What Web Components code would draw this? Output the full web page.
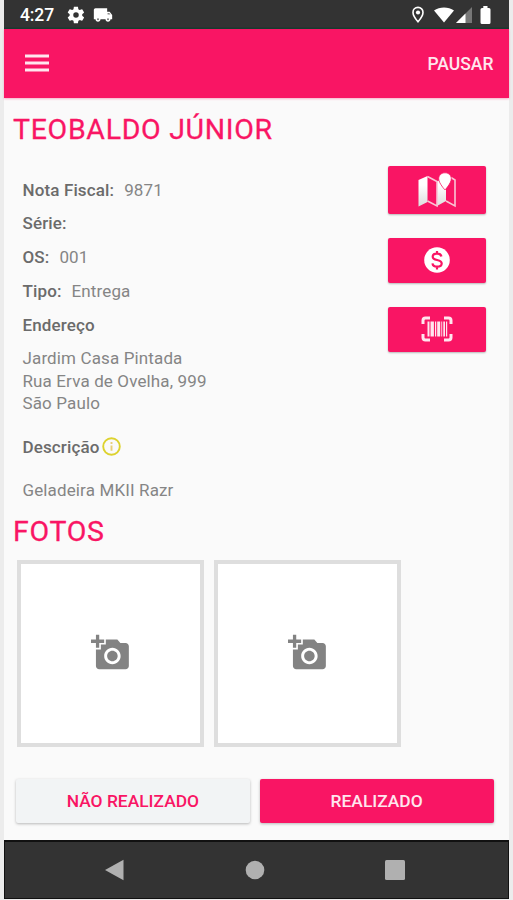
<!DOCTYPE html>
<html lang="pt-BR">
<head>
<meta charset="utf-8">
<title>Entrega</title>
<style>
html,body{margin:0;height:100%;overflow:hidden}
body{background:#ececec;font-family:Roboto,"Liberation Sans",sans-serif;--pink:#f91564}
</style>
</head>
<body>
<delivery-screen></delivery-screen>
<script>
const define = (name, html) => {
  const t = document.createElement('template');
  t.innerHTML = html;
  customElements.define(name, class extends HTMLElement {
    constructor() {
      super();
      this.attachShadow({mode: 'open'}).appendChild(t.content.cloneNode(true));
    }
  });
};

define('status-bar', `<style>
:host{display:flex;flex:none;box-sizing:border-box;height:29px;background:linear-gradient(#333 0 27px,#17392f 28px);padding:0 18px 0 16px;color:#fff;justify-content:space-between}
div{display:flex;align-items:center;height:30px}
span{font-size:17.5px;font-weight:500;width:46px;letter-spacing:-.1px}
svg{display:block;fill:#fff}
</style>
<div><span>4:27</span>
<svg width="20" height="20" viewBox="0 0 24 24"><path fill-rule="evenodd" d="M19.4 13c.1-.3.1-.6.1-1s0-.7-.1-1l2.100-1.600c.2-.2.3-.4.1-.6l-2-3.500c-.1-.2-.4-.3-.6-.2l-2.500 1c-.5-.4-1.100-.7-1.700-1l-.4-2.600c0-.3-.2-.5-.5-.5h-4c-.3 0-.5.2-.5.5L9 5.100c-.6.3-1.200.6-1.700 1l-2.500-1c-.2-.1-.5 0-.6.2l-2 3.500c-.1.2-.1.4.1.6L4.400 11c0 .3-.1.6-.1 1s0 .7.1 1l-2.100 1.600c-.2.2-.3.4-.1.6l2 3.500c.1.2.4.3.6.2l2.500-1c.5.4 1.100.7 1.700 1l.4 2.600c0 .3.2.5.5.5h4c.3 0 .5-.2.5-.5l.4-2.600c.6-.3 1.200-.6 1.700-1l2.500 1c.2.1.5 0 .6-.2l2-3.500c.1-.2.1-.4-.1-.6zM12 15.300a3.300 3.300 0 1 1 0-6.600 3.300 3.300 0 0 1 0 6.600z"/></svg>
<svg style="margin-left:7px" width="20" height="20" viewBox="0 0 24 24"><path d="M20 8h-3V4H3c-1.100 0-2 .9-2 2v11h2c0 1.660 1.340 3 3 3s3-1.340 3-3h6c0 1.660 1.340 3 3 3s3-1.340 3-3h2v-5l-3-4z"/><circle cx="6" cy="17" r="1.200" fill="#777"/><circle cx="18" cy="17" r="1.200" fill="#777"/><path fill="#888" d="M17.500 9.500h2l1.500 2h-3.500z"/></svg>
</div>
<div>
<svg width="14" height="18" viewBox="0 0 14 18"><path fill="none" stroke="#fff" stroke-width="1.600" d="M7 1.400c-3 0-5 2.200-5 5 0 3.400 5 9.400 5 9.400s5-6 5-9.400c0-2.800-2-5-5-5z"/><circle cx="7" cy="6.500" r="2.100"/></svg>
<svg style="margin-left:9px" width="20" height="16" viewBox="0 0 20 16"><path d="M0 3.600C5.500-.6 14.500-.6 20 3.600L10 15.500z"/></svg>
<svg style="margin-left:2px" width="16" height="16" viewBox="0 0 16 16"><path fill="#777" d="M0 16 16 0v16z"/><path d="M0 16 9.500 6.500V16z"/></svg>
<svg style="margin-left:7.500px" width="11" height="18" viewBox="0 0 11 18"><path d="M3.300 0h4.200v2H9q1.500 0 1.500 1.500v13Q10.500 18 9 18H2Q.5 18 .5 16.500v-13Q.5 2 2 2h1.300z"/></svg>
</div>`);

define('app-bar', `<style>
:host{display:flex;flex:none;height:68.500px;background:var(--pink);align-items:center;justify-content:space-between;padding:0 15px 0 21px;color:#ffe6ee;box-shadow:0 1px 2px #f9156455}
svg{display:block}
span{font-size:17.500px;font-weight:500;padding-top:1px}
</style>
<svg width="24" height="18" viewBox="0 0 24 18"><path stroke="#ffe6ee" stroke-width="3" d="M0 2h24M0 9h24M0 16h24"/></svg>
<span><slot></slot></span>`);

define('section-title', `<style>
:host{display:block;font-size:28.500px;line-height:34px;letter-spacing:.7px;color:var(--pink);white-space:nowrap;-webkit-text-stroke:.3px var(--pink)}
</style><slot></slot>`);

define('info-row', `<style>
:host{display:flex;gap:10px;line-height:33.750px;font-size:17px;letter-spacing:.13px;color:#858585;white-space:nowrap}
b{font-weight:500;color:#6b6b6b}
</style><b><slot name="label"></slot></b><slot></slot>`);

define('action-button', `<style>
:host{display:flex;align-items:center;justify-content:center;width:98px;height:45px;background:var(--pink);border-radius:2px;box-shadow:0 1px 2px #0004}
</style><slot></slot>`);

define('photo-slot', `<style>
:host{display:flex;box-sizing:border-box;width:187px;height:187px;border:4px solid #dedede;background:#fff;align-items:center;justify-content:center}
svg{display:block;margin:-1px -1px 0 0}
</style>
<svg width="39.500" height="39.500" viewBox="0 0 24 24" fill="#838383"><path d="M3 4V1h2v3h3v2H5v3H3V6H0V4h3zm3 6V7h3V4h7l1.830 2H21c1.100 0 2 .9 2 2v12c0 1.100-.9 2-2 2H5c-1.100 0-2-.9-2-2V10h3zm7 9c2.760 0 5-2.240 5-5s-2.240-5-5-5-5 2.240-5 5 2.240 5 5 5zm-3.200-5c0 1.770 1.430 3.200 3.200 3.200s3.200-1.430 3.200-3.200-1.430-3.200-3.200-3.200-3.200 1.430-3.200 3.200z"/></svg>`);

define('wide-button', `<style>
:host{display:flex;align-items:center;justify-content:center;flex:1;height:44px;border-radius:2px;background:#f2f4f5;color:var(--pink);font-size:17.400px;font-weight:500;box-shadow:0 1px 3px #0004}
:host([primary]){background:var(--pink);color:#ffe6ee}
</style><slot></slot>`);

define('nav-bar', `<style>
:host{display:grid;flex:none;box-sizing:border-box;height:59px;background:#333;border:1px solid #111;border-top-width:2px;padding-right:3px;grid-template-columns:repeat(3,140px);justify-content:center;align-items:center;justify-items:center}
svg{display:block;fill:#b0b0b0}
</style>
<svg width="20" height="22" viewBox="0 0 20 22"><path d="M0 11 18.500.8v20.400z"/></svg>
<svg width="20" height="20" viewBox="0 0 20 20"><circle cx="10" cy="10" r="9.300"/></svg>
<svg width="20" height="20" viewBox="0 0 20 20"><rect width="20" height="20" rx="1.500"/></svg>`);

define('delivery-screen', `<style>
:host{display:flex;flex-direction:column;width:504.500px;height:898.500px;margin-left:4px;background:#fafafa}
main{flex:1;display:flex;flex-direction:column}
.name{margin:15px 0 0 9px}
.body{box-sizing:border-box;display:flex;justify-content:space-between;height:368px;padding:27px 22.500px 0 18.500px}
.actions{display:flex;flex-direction:column;gap:24px;margin-top:-8px}
.address,.desc{font-size:17px;line-height:22.500px;letter-spacing:.13px;color:#858585}
.address{margin-top:5px}
.label{display:flex;align-items:center;gap:2px;font-size:17px;line-height:22px;letter-spacing:.13px;font-weight:500;color:#6b6b6b;margin:21px 0}
svg{display:block}
.fotos{margin-left:9px}
.photos{display:flex;gap:10px;margin:11.500px 0 0 13px}
.buttons{display:flex;gap:10px;margin:32px 15px 0 12px}
</style>
<status-bar></status-bar>
<app-bar>PAUSAR</app-bar>
<main>
<section-title class="name">TEOBALDO JÚNIOR</section-title>
<div class="body">
<div>
<info-row><span slot="label">Nota Fiscal:</span>9871</info-row>
<info-row><span slot="label">Série:</span></info-row>
<info-row><span slot="label">OS:</span>001</info-row>
<info-row><span slot="label">Tipo:</span>Entrega</info-row>
<info-row><span slot="label">Endereço</span></info-row>
<div class="address">Jardim Casa Pintada<br>Rua Erva de Ovelha, 999<br>São Paulo</div>
<div class="label">Descrição<svg width="19" height="19" viewBox="0 0 19 19"><circle cx="9.500" cy="9.500" r="8.300" fill="none" stroke="#ddd22e" stroke-width="1.900"/><path d="M9.500 5v2M9.500 8.600v5.200" stroke="#e8cf78" stroke-width="1.900"/></svg></div>
<div class="desc">Geladeira MKII Razr</div>
</div>
<div class="actions">
<action-button style="height:48px"><svg width="40" height="36" viewBox="0 0 40 36">
<defs><linearGradient id="paper" x2="0" y2="1"><stop offset=".3" stop-color="#fff"/><stop offset="1" stop-color="#ddd"/></linearGradient></defs>
<path fill="url(#paper)" d="M1.500 8 10.500 4V30L1.500 34.500zM20 9.500l4-2 5 10.500V29l-9 5z"/>
<path fill="none" stroke="#f9c4d4" stroke-width="1.600" d="M10.500 4.500 20 9.500V34L10.500 29M29 29l9 5V8l-4-2.500"/>
<path fill="#fff" stroke="#f91564" stroke-width=".8" d="M28 .8c-3.700 0-6.300 2.600-6.300 6 0 4.300 6.300 11.200 6.300 11.200s6.300-6.900 6.300-11.200c0-3.400-2.600-6-6.300-6z"/></svg></action-button>
<action-button><svg width="26" height="26" viewBox="0 0 26 26"><circle cx="13" cy="13" r="12.800" fill="#fff"/><path fill="none" stroke="#f91564" stroke-width="2.200" d="M17.400 9.400C17 7.500 15.400 6.700 13 6.700c-2.600 0-4.300 1.200-4.300 3 0 4.600 9 2 9 6.800 0 1.900-1.800 3.100-4.500 3.100-2.800 0-4.500-1.300-4.700-3.300M13 3.900v3M13 19.500v3"/></svg></action-button>
<action-button><svg width="32" height="26" viewBox="0 0 32 26"><path fill="none" stroke="#ffe6ee" stroke-width="3" d="M2 8V4.500Q2 2 4.500 2H9M23 2h4.500Q30 2 30 4.500V8M30 18v3.500Q30 24 27.500 24H23M9 24H4.500Q2 24 2 21.500V18"/><path fill="#ffe6ee" d="M6.500 5.500h2v15h-2zM9.500 5.500h3.400v15H9.500zM14 5.500h1.200v15H14zM16.200 5.500h3v15h-3zM20.300 5.500h.9v15h-.9zM22.300 5.500h1.700v15h-1.700zM25 5.500h1.200v15H25z"/></svg></action-button>
</div>
</div>
<section-title class="fotos">FOTOS</section-title>
<div class="photos"><photo-slot></photo-slot><photo-slot></photo-slot></div>
<div class="buttons"><wide-button>NÃO REALIZADO</wide-button><wide-button primary>REALIZADO</wide-button></div>
</main>
<nav-bar></nav-bar>`);
</script>
</body>
</html>
